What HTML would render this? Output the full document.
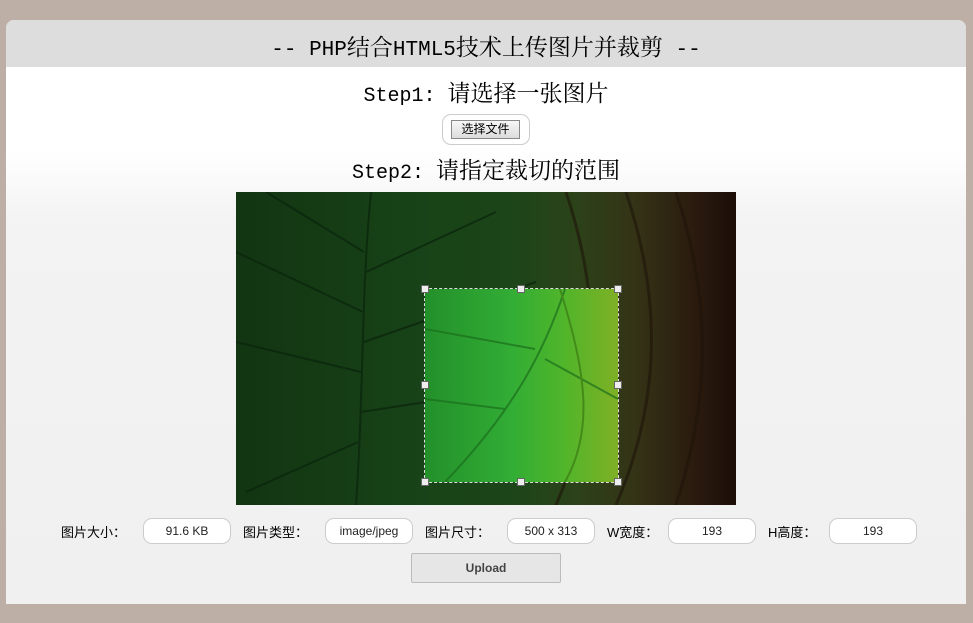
<!DOCTYPE html>
<html><head><meta charset="utf-8"><style>
body{margin:0;width:973px;height:623px;background:#bdaea6;font-family:"Liberation Mono","Noto Serif CJK SC",monospace;position:relative;overflow:hidden}
.box{position:absolute;left:6px;top:20px;width:960px;height:584px;border-radius:8px 8px 0 0;background:linear-gradient(#fff 0,#fff 130px,#f3f3f3 200px,#f0f0f0);overflow:hidden}
.hd{height:47px;background:#dddddd;text-align:center;font-size:21px;line-height:52px;color:#000}
.c{font-family:"Noto Serif CJK SC",serif;font-size:23px}
.t{position:absolute;left:0;width:960px;text-align:center;font-size:20px;line-height:30px}
.fb{position:absolute;left:436px;top:94px;width:86px;height:29px;border:1px solid #ccc;border-radius:9px;background:#fff}
.fb span{position:absolute;left:8px;top:5px;width:67px;height:17px;border:1px solid #888;background:linear-gradient(#f7f7f7,#dcdcdc);font:12px "Liberation Sans","Noto Sans CJK SC",sans-serif;text-align:center;line-height:17px}
.img{position:absolute;left:230px;top:172px;width:500px;height:313px;background:linear-gradient(90deg,#123512 0%,#184418 40%,#1c4519 55%,#2c4219 68%,#343316 80%,#2a1a0e 92%,#1c0d08 100%);overflow:hidden}
.crop{position:absolute;left:189px;top:97px;width:193px;height:193px;background:linear-gradient(90deg,#23902a,#32ad35 45%,#50b52a 72%,#7fb025 100%);outline:1px dashed #ddd}
.h{position:absolute;width:6px;height:6px;border:1px solid #666;background:#eee;margin:-4px 0 0 -4px}
.lb{position:absolute;top:502px;font-size:13px;font-family:"Liberation Sans","Noto Sans CJK SC",sans-serif}
.in{position:absolute;top:498px;width:86px;height:24px;border:1px solid #ccc;border-radius:9px;background:#fff;text-align:center;font:12px/24px "Liberation Sans",sans-serif;color:#222}
.up{position:absolute;left:405px;top:533px;width:148px;height:28px;border:1px solid #bbb;border-radius:2px;background:#e6e6e6;text-align:center;font:bold 12px/28px "Liberation Sans",sans-serif;color:#444}
</style></head><body>
<div class="box">
<div class="hd">-- PHP<span class="c">结合</span>HTML5<span class="c">技术上传图片并裁剪</span> --</div>
<div class="t" style="top:57px">Step1: <span class="c">请选择一张图片</span></div>
<div class="fb"><span>选择文件</span></div>
<div class="t" style="top:134px">Step2: <span class="c">请指定裁切的范围</span></div>
<div class="img">
<svg width="500" height="313" style="position:absolute;left:0;top:0">
<g stroke="#0a240c" stroke-width="2" fill="none" opacity=".7">
<path d="M135 0 C125 100 128 200 120 313"/>
<path d="M128 60 L30 0 M127 120 L0 60 M125 180 L0 150 M122 250 L10 300"/>
<path d="M130 80 L260 20 M128 150 L300 90 M125 220 L320 190"/>
</g>
<g stroke="#1f140a" stroke-width="3" fill="none" opacity=".6">
<path d="M330 0 C370 120 360 220 320 313"/><path d="M390 0 C430 120 420 220 380 313"/><path d="M440 0 C480 120 470 220 440 313"/>
</g>
</svg>
<div class="crop">
<svg width="193" height="193" style="position:absolute;left:0;top:0"><g stroke="#1b6f1c" stroke-width="2" fill="none" opacity=".7"><path d="M140 0 C120 60 90 120 20 193"/><path d="M110 60 L0 40 M80 120 L0 110 M120 70 L193 110"/><path d="M135 0 C160 80 170 140 140 193" stroke="#3a7a14"/></g></svg>
</div>
<div class="h" style="left:189px;top:97px"></div><div class="h" style="left:285px;top:97px"></div><div class="h" style="left:382px;top:97px"></div>
<div class="h" style="left:189px;top:193px"></div><div class="h" style="left:382px;top:193px"></div>
<div class="h" style="left:189px;top:290px"></div><div class="h" style="left:285px;top:290px"></div><div class="h" style="left:382px;top:290px"></div>
</div>
<div class="lb" style="left:55px">图片大小：</div><div class="in" style="left:137px">91.6 KB</div>
<div class="lb" style="left:237px">图片类型：</div><div class="in" style="left:319px">image/jpeg</div>
<div class="lb" style="left:419px">图片尺寸：</div><div class="in" style="left:501px">500 x 313</div>
<div class="lb" style="left:601px">W宽度：</div><div class="in" style="left:662px">193</div>
<div class="lb" style="left:762px">H高度：</div><div class="in" style="left:823px">193</div>
<div class="up">Upload</div>
</div>
</body></html>
